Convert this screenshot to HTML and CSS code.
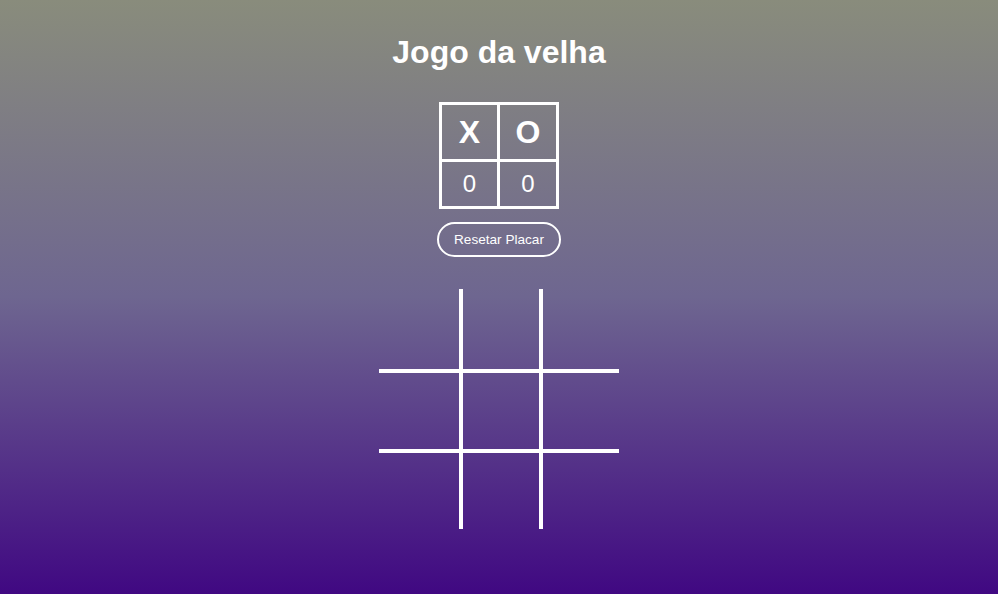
FILE: index.html
```html
<!DOCTYPE html>
<html lang="pt-BR">
<head>
<meta charset="utf-8">
<title>Jogo da velha</title>
<link rel="stylesheet" href="styles.css">
</head>
<body>
<main class="app">
  <h1 class="title">Jogo da velha</h1>
  <table class="score">
    <tr class="score-head"><th class="col-x">X</th><th class="col-o">O</th></tr>
    <tr class="score-vals"><td>0</td><td>0</td></tr>
  </table>
  <button class="reset" type="button">Resetar Placar</button>
  <div class="board">
    <div class="cell"></div><div class="cell"></div><div class="cell"></div>
    <div class="cell"></div><div class="cell"></div><div class="cell"></div>
    <div class="cell"></div><div class="cell"></div><div class="cell"></div>
  </div>
</main>
</body>
</html>
```
FILE: styles.css
```css
html, body {
  margin: 0;
  padding: 0;
}
body {
  min-height: 594px;
  background: linear-gradient(to bottom, #898c7c 0%, #6e6690 50%, #400882 100%);
  font-family: "Liberation Sans", Arial, sans-serif;
  color: #fff;
}
.app {
  display: flex;
  flex-direction: column;
  align-items: center;
  padding-top: 34px;
  padding-bottom: 65px;
}
.title {
  margin: 0 0 31px;
  font-size: 32px;
  font-weight: bold;
  line-height: 37px;
}
.score {
  border-collapse: collapse;
  border: 3px solid #fff;
}
.score th, .score td {
  border: 3px solid #fff;
  padding: 0;
  text-align: center;
}
.score th {
  height: 54px;
  font-size: 32px;
  font-weight: bold;
}
.score .col-x { width: 55px; }
.score .col-o { width: 56px; }
.score td {
  height: 44px;
  font-size: 24px;
}
.reset {
  margin-top: 13px;
  width: 124px;
  height: 35px;
  border: 2px solid #fff;
  border-radius: 18px;
  background: transparent;
  color: #fff;
  font-family: "Liberation Sans", Arial, sans-serif;
  font-size: 13.6px;
  padding: 0;
}
.board {
  margin-top: 32px;
  display: grid;
  grid-template-columns: 80px 80px 80px;
  grid-template-rows: 80px 80px 80px;
}
.cell {
  box-sizing: border-box;
}
.cell:nth-child(3n+2), .cell:nth-child(3n) {
  border-left: 4px solid #fff;
}
.cell:nth-child(n+4) {
  border-top: 4px solid #fff;
}
```
